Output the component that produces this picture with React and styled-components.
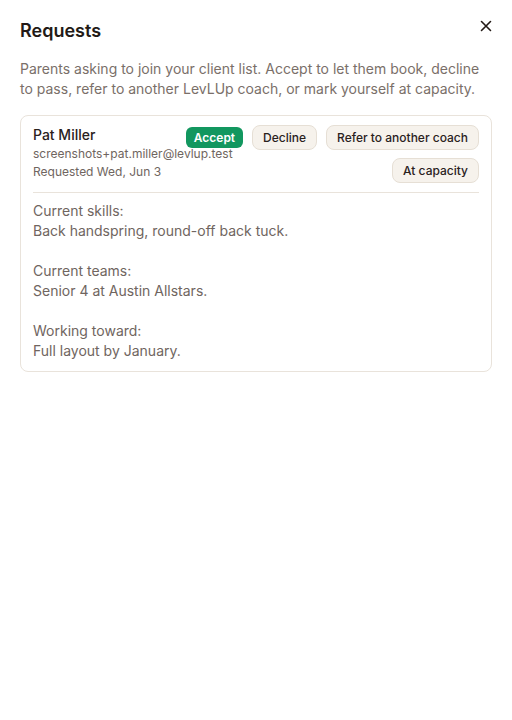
import React from "react";
import styled, { createGlobalStyle } from "styled-components";

const Global = createGlobalStyle`
  html, body { margin: 0; padding: 0; background: #ffffff; }
  body { font-family: Inter, "Noto Sans", sans-serif; -webkit-font-smoothing: antialiased; }
  * { box-sizing: border-box; }
`;

const Panel = styled.div`
  width: 512px;
  padding: 18px 20px 20px;
  display: flex;
  flex-direction: column;
`;

const Header = styled.div`
  display: flex;
  align-items: flex-start;
  justify-content: space-between;
`;

const Title = styled.h2`
  margin: 1px 0 0;
  font-size: 18px;
  line-height: 24px;
  font-weight: 600;
  color: #231a16;
`;

const CloseButton = styled.button`
  border: none;
  background: transparent;
  padding: 0;
  margin: 1px -1px 0 0;
  width: 14px;
  height: 14px;
  display: flex;
  align-items: center;
  justify-content: center;
  color: #231a16;
  cursor: pointer;
`;

const Description = styled.p`
  margin: 16px 0 0;
  font-size: 14px;
  line-height: 20px;
  color: #7a6f69;
`;

const Card = styled.div`
  margin-top: 16px;
  border: 1px solid #e9e3db;
  border-radius: 8px;
  padding: 9px 12px 10px;
`;

const CardTop = styled.div`
  display: flex;
  justify-content: space-between;
  gap: 8px;
  padding-bottom: 9px;
  border-bottom: 1px solid #e9e3db;
`;

const Who = styled.div`
  display: flex;
  flex-direction: column;
  flex: 1 1 0;
  min-width: 0;
  white-space: nowrap;
`;

const Name = styled.div`
  font-size: 14px;
  line-height: 20px;
  font-weight: 500;
  color: #2a211d;
`;

const Meta = styled.div`
  font-size: 12px;
  line-height: 18px;
  color: #6f6560;
`;

const Actions = styled.div`
  flex: 0 0 296px;
  display: flex;
  flex-wrap: wrap;
  justify-content: flex-end;
  align-content: flex-start;
  align-items: center;
  gap: 8px 9px;
`;

const ActionButton = styled.button`
  font-family: inherit;
  font-size: 12px;
  line-height: 15px;
  font-weight: ${(p) => (p.$primary ? 600 : 500)};
  border-radius: ${(p) => (p.$primary ? "6px" : "8px")};
  padding: ${(p) => (p.$primary ? "3px 8px" : "4px 10px")};
  border: ${(p) => (p.$primary ? "none" : "1px solid #e6dfd5")};
  background: ${(p) => (p.$primary ? "#12975f" : "#f6f2ec")};
  color: ${(p) => (p.$primary ? "#ffffff" : "#2a211d")};
  cursor: pointer;
  white-space: nowrap;
`;

const Body = styled.div`
  margin-top: 8px;
  font-size: 14px;
  line-height: 20px;
  color: #6f6560;
  white-space: pre-line;
`;

const request = {
  name: "Pat Miller",
  email: "screenshots+pat.miller@levlup.test",
  requested: "Requested Wed, Jun 3",
  note:
    "Current skills:\nBack handspring, round-off back tuck.\n\nCurrent teams:\nSenior 4 at Austin Allstars.\n\nWorking toward:\nFull layout by January.",
};

export default function App() {
  return (
    <>
      <Global />
      <Panel>
        <Header>
          <Title>Requests</Title>
          <CloseButton aria-label="Close">
            <svg width="12" height="12" viewBox="0 0 12 12" fill="none" stroke="currentColor" strokeWidth="1.6" strokeLinecap="round">
              <path d="M1.5 1.5l9 9M10.5 1.5l-9 9" />
            </svg>
          </CloseButton>
        </Header>
        <Description>
          Parents asking to join your client list. Accept to let them book, decline to pass, refer to another LevLUp coach, or mark yourself at capacity.
        </Description>
        <Card>
          <CardTop>
            <Who>
              <Name>{request.name}</Name>
              <Meta>{request.email}</Meta>
              <Meta>{request.requested}</Meta>
            </Who>
            <Actions>
              <ActionButton $primary>Accept</ActionButton>
              <ActionButton>Decline</ActionButton>
              <ActionButton>Refer to another coach</ActionButton>
              <ActionButton>At capacity</ActionButton>
            </Actions>
          </CardTop>
          <Body>{request.note}</Body>
        </Card>
      </Panel>
    </>
  );
}
